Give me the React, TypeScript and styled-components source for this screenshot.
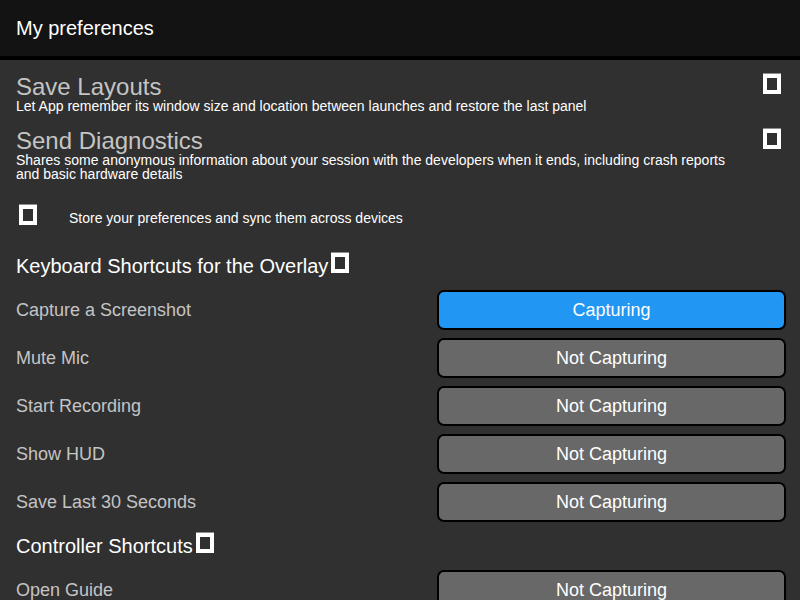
import styled, { createGlobalStyle } from 'styled-components';

const GlobalStyle = createGlobalStyle`
  html, body {
    margin: 0;
    padding: 0;
    background: #303030;
  }

  body {
    font-family: Ahem, "Liberation Sans", sans-serif;
  }
`;

interface Keybinding {
  label: string;
  value: string;
  active?: boolean;
}

const overlayKeys: Keybinding[] = [
  { label: 'Capture a Screenshot', value: 'Capturing', active: true },
  { label: 'Mute Mic', value: 'Not Capturing' },
  { label: 'Start Recording', value: 'Not Capturing' },
  { label: 'Show HUD', value: 'Not Capturing' },
  { label: 'Save Last 30 Seconds', value: 'Not Capturing' },
];

const controllerKeys: Keybinding[] = [{ label: 'Open Guide', value: 'Not Capturing' }];

const SettingRows = ({ items }: { items: Keybinding[] }) => (
  <>
    {items.map((item) => (
      <SettingRow key={item.label}>
        <Label>{item.label}</Label>
        <KeyButton $active={item.active}>{item.value}</KeyButton>
      </SettingRow>
    ))}
  </>
);

export default function App() {
  return (
    <Page>
      <GlobalStyle />
      <Header>My preferences</Header>

      <Content>
        <ToggleRow>
          <ToggleText>
            <Title>Save Layouts</Title>
            <Description>
              Let App remember its window size and location between launches and restore the
              last panel
            </Description>
          </ToggleText>
          <Check $margin="-1px 3px 0 0" />
        </ToggleRow>

        <ToggleRow>
          <ToggleText>
            <Title>Send Diagnostics</Title>
            <Description>
              Shares some anonymous information about your session with the developers when it
              ends, including crash reports and basic hardware details
            </Description>
          </ToggleText>
          <Check $margin="0 3px 0 0" />
        </ToggleRow>

        <CheckRow>
          <Check $margin="3px 0 0 3px" />
          <span>Store your preferences and sync them across devices</span>
        </CheckRow>

        <SettingsList>
          <Heading>
            Keyboard Shortcuts for the Overlay
            <Check $margin="3px 0 3px 3px" />
          </Heading>
          <SettingRows items={overlayKeys} />

          <Heading>
            Controller Shortcuts
            <Check $margin="3px 0 3px 3px" />
          </Heading>
          <SettingRows items={controllerKeys} />
        </SettingsList>
      </Content>
    </Page>
  );
}

const Page = styled.div`
  height: 100vh;
  overflow: hidden;
  display: flex;
  flex-direction: column;
`;

const Header = styled.header`
  flex: none;
  height: 56px;
  display: flex;
  align-items: center;
  padding: 0 16px;

  background: #131313;
  border-bottom: 4px solid #000;
  color: #fff;
  font-size: 20px;
  line-height: 1;
`;

const Content = styled.main`
  display: flex;
  flex-direction: column;
  padding: 15px 16px;
`;

const ToggleRow = styled.div`
  display: flex;
  align-items: flex-start;
  justify-content: space-between;
  gap: 12px;

  & + & {
    margin-top: 16px;
  }
`;

const ToggleText = styled.div`
  flex: 1;
  min-width: 0;
`;

const Title = styled.div`
  color: #c4c4c4;
  font-size: 24px;
  line-height: 1;
`;

const Description = styled.div`
  color: #fff;
  font-size: 14px;
  line-height: 1;
`;

const Check = styled.input.attrs({ type: 'checkbox' })<{ $margin: string }>`
  appearance: none;
  flex: none;
  box-sizing: border-box;
  width: 18px;
  height: 20px;
  margin: ${({ $margin }) => $margin};
  border: 4px solid #fff;
  border-radius: 0;
  background: transparent;
  box-shadow: 0 -1px 0 rgba(255, 255, 255, 0.45);
`;

const CheckRow = styled.label`
  display: flex;
  align-items: flex-end;
  gap: 32px;
  margin-top: 21px;

  color: #fff;
  font-size: 14px;
  line-height: 1;
`;

const SettingsList = styled.div`
  display: flex;
  flex-direction: column;
  gap: 8px;
  margin-top: 25px;
`;

const Heading = styled.div`
  display: flex;
  align-items: flex-end;
  margin-bottom: 6px;

  color: #fff;
  font-size: 20px;
  line-height: 1;
`;

const SettingRow = styled.div`
  display: flex;
  align-items: center;
  justify-content: space-between;
  height: 40px;
`;

const Label = styled.div`
  color: #c4c4c4;
  font-size: 18px;
  line-height: 1;
`;

const KeyButton = styled.button<{ $active?: boolean }>`
  box-sizing: border-box;
  width: 349px;
  height: 40px;
  margin-right: -2px;
  padding: 0;
  display: flex;
  align-items: center;
  justify-content: center;

  background: ${({ $active }) => ($active ? '#2196f3' : '#686868')};
  border: 2px solid #000;
  border-radius: 7px;
  color: #fff;
  font-family: inherit;
  font-size: 18px;
  line-height: 1;
`;
